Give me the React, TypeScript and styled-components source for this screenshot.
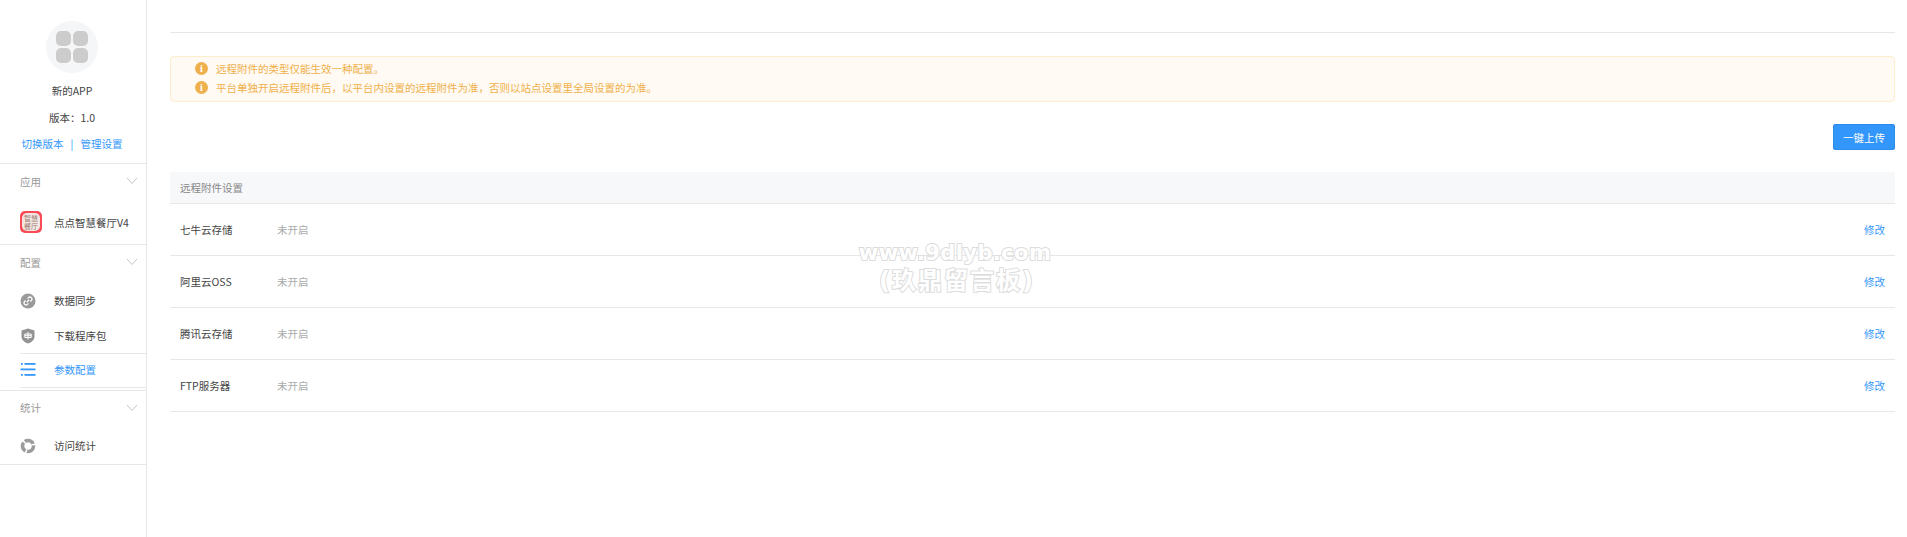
import styled, { createGlobalStyle } from 'styled-components';

const blue = '#3296fa';
const line = '#e7e7e7';

const GlobalStyle = createGlobalStyle`
  * { box-sizing: border-box; }
  html, body { margin: 0; padding: 0; background: #fff; }
  body {
    font-family: "Noto Sans CJK SC", "Liberation Sans", sans-serif;
    font-size: 10.5px;
    color: #444;
    overflow: hidden;
  }
`;

const Page = styled.div`
  position: relative;
  display: flex;
  height: 537px;
`;

// 왼쪽 메뉴
const Sidebar = styled.aside`
  width: 147px;
  flex: none;
  border-right: 1px solid ${line};
`;

const AppInfo = styled.div`
  height: 164px;
  padding: 21px 2px 0 0;
  display: flex;
  flex-direction: column;
  align-items: center;
  border-bottom: 1px solid ${line};
`;

const Avatar = styled.div`
  width: 52px;
  height: 52px;
  margin-bottom: 4px;
  border-radius: 50%;
  background: #f5f6f8;
  display: grid;
  grid-template-columns: 15px 15px;
  grid-auto-rows: 15px;
  gap: 2px;
  place-content: center;
  span {
    background: #ccc;
    border-radius: 5px;
  }
`;

const InfoLine = styled.div`
  height: 27px;
  line-height: 27px;
`;

const LinkRow = styled.div`
  height: 26px;
  line-height: 26px;
  color: ${blue};
  display: flex;
  gap: 7px;
`;

const Section = styled.section`
  border-bottom: 1px solid ${line};
  padding-bottom: ${p => p.$bottom ?? 0}px;
`;

const SectionTitle = styled.div`
  height: ${p => p.$height ?? 36}px;
  padding: 0 8px ${p => p.$under ?? 2}px 20px;
  display: flex;
  align-items: center;
  justify-content: space-between;
  color: #999;
`;

const Item = styled.div`
  height: ${p => p.$height ?? 35}px;
  padding-left: 20px;
  display: flex;
  align-items: center;
`;

const ActiveItem = styled(Item)`
  margin-left: 20px;
  padding: 0 0 2px;
  color: ${blue};
  border-top: 1px solid ${line};
  border-bottom: 1px solid ${line};
`;

const ItemIcon = styled.span`
  width: 34px;
  flex: none;
  display: flex;
  align-items: center;
`;

const AppLogo = styled.span`
  width: 22px;
  height: 22px;
  border-radius: 5px;
  background: #fb4a55;
  display: flex;
  align-items: center;
  justify-content: center;
  span {
    width: 18px;
    height: 18px;
    border-radius: 5px;
    background: #f1e6e1;
    color: #a07a70;
    font-size: 7px;
    line-height: 8px;
    text-align: center;
    padding-top: 1px;
  }
`;

// 오른쪽 본문
const Main = styled.main`
  flex: 1;
  padding: 0 12px 0 23px;
`;

const TopLine = styled.div`
  height: 33px;
  border-bottom: 1px solid ${line};
`;

const Alert = styled.div`
  margin-top: 23px;
  height: 46px;
  padding: 2px 0 0 24px;
  background: #fffaf3;
  border: 1px solid #fdeecb;
  border-radius: 4px;
  color: #efb04a;
`;

const AlertRow = styled.div`
  height: 19px;
  display: flex;
  align-items: center;
  gap: 8px;
`;

const InfoDot = styled.span`
  width: 13px;
  height: 13px;
  border-radius: 50%;
  background: #eeb04c;
  color: #fff;
  font: bold 10px/13px "Liberation Serif", serif;
  text-align: center;
`;

const Toolbar = styled.div`
  margin-top: 22px;
  display: flex;
  justify-content: flex-end;
`;

const Button = styled.button`
  width: 62px;
  height: 26px;
  padding: 0;
  background: ${blue};
  border: 1px solid #2b8ceb;
  border-radius: 2px;
  color: #fff;
  font: inherit;
`;

const Table = styled.div`
  margin-top: 22px;
`;

const TableHead = styled.div`
  height: 32px;
  padding-left: 10px;
  display: flex;
  align-items: center;
  background: #f7f8fa;
  border-bottom: 1px solid ${line};
  color: #888;
`;

const Row = styled.div`
  height: 52px;
  padding: 0 10px;
  display: flex;
  align-items: center;
  border-bottom: 1px solid ${line};
`;

const RowName = styled.span`
  width: 97px;
`;

const RowStatus = styled.span`
  flex: 1;
  color: #aaa;
`;

const RowAction = styled.a`
  color: ${blue};
`;

const Watermark = styled.div`
  position: absolute;
  left: 755px;
  top: 240px;
  width: 400px;
  text-align: center;
  font-family: "DejaVu Sans", "Noto Sans CJK SC", sans-serif;
  font-weight: bold;
  color: #fff;
  -webkit-text-stroke: 2px #dcdcdc;
  paint-order: stroke fill;
`;

const WatermarkLine = styled.div`
  font-size: ${p => p.$size}px;
  line-height: ${p => p.$lh}px;
  letter-spacing: ${p => p.$gap}px;
  padding-left: ${p => p.$shift ?? 0}px;
`;

const Chevron = () => (
  <svg width="12" height="8" viewBox="0 0 12 8" fill="none" stroke="#c4c8cc" strokeWidth="1">
    <path d="M1 1l5 5.5L11 1" />
  </svg>
);

const LinkIcon = () => (
  <svg width="16" height="16" viewBox="0 0 16 16">
    <circle cx="8" cy="8" r="7.5" fill="#9a9a9a" />
    <path d="M6.8 9.2l2.4-2.4M7.5 5.6l1-1a2 2 0 0 1 2.9 2.9l-1 1M8.5 10.4l-1 1a2 2 0 0 1-2.9-2.9l1-1" fill="none" stroke="#fff" strokeWidth="1.3" />
  </svg>
);

const ShieldIcon = () => (
  <svg width="16" height="16" viewBox="0 0 16 16">
    <path d="M8 0.5l6.5 2v6c0 3.500-3 5.800-6.500 7-3.500-1.200-6.500-3.500-6.500-7v-6z" fill="#939393" />
    <path d="M4.800 6h6.400v3.500H4.800zM8 4v7.500M4.800 7.700h6.400" fill="none" stroke="#fff" strokeWidth="1" />
  </svg>
);

const ListIcon = () => (
  <svg width="16" height="15" viewBox="0 0 16 15" fill={blue}>
    <rect x="1" y="1" width="1.800" height="1.800" />
    <rect x="4.500" y="1" width="11" height="1.800" />
    <rect x="0.500" y="6.500" width="15" height="1.800" />
    <rect x="1" y="12" width="1.800" height="1.800" />
    <rect x="4.500" y="12" width="11" height="1.800" />
  </svg>
);

const StatIcon = () => (
  <svg width="16" height="16" viewBox="0 0 16 16" fill="none" stroke="#9c9c9c" strokeWidth="3.600">
    <circle cx="8" cy="8" r="5.500" strokeDasharray="9.500 1.500" />
  </svg>
);

const storages = ['七牛云存储', '阿里云OSS', '腾讯云存储', 'FTP服务器'];

export default function App() {
  return (
    <Page>
      <GlobalStyle />
      <Sidebar>
        <AppInfo>
          <Avatar>
            <span />
            <span />
            <span />
            <span />
          </Avatar>
          <InfoLine>新的APP</InfoLine>
          <InfoLine>版本：1.0</InfoLine>
          <LinkRow>
            <span>切换版本</span>
            <span>|</span>
            <span>管理设置</span>
          </LinkRow>
        </AppInfo>
        <Section>
          <SectionTitle>
            应用
            <Chevron />
          </SectionTitle>
          <Item $height={44}>
            <ItemIcon>
              <AppLogo>
                <span>智慧餐厅</span>
              </AppLogo>
            </ItemIcon>
            点点智慧餐厅V4
          </Item>
        </Section>
        <Section $bottom={2}>
          <SectionTitle $height={38} $under={4}>
            配置
            <Chevron />
          </SectionTitle>
          <Item>
            <ItemIcon>
              <LinkIcon />
            </ItemIcon>
            数据同步
          </Item>
          <Item>
            <ItemIcon>
              <ShieldIcon />
            </ItemIcon>
            下载程序包
          </Item>
          <ActiveItem>
            <ItemIcon>
              <ListIcon />
            </ItemIcon>
            参数配置
          </ActiveItem>
        </Section>
        <Section>
          <SectionTitle $under={3}>
            统计
            <Chevron />
          </SectionTitle>
          <Item $height={37}>
            <ItemIcon>
              <StatIcon />
            </ItemIcon>
            访问统计
          </Item>
        </Section>
      </Sidebar>
      <Main>
        <TopLine />
        <Alert>
          <AlertRow>
            <InfoDot>i</InfoDot>
            远程附件的类型仅能生效一种配置。
          </AlertRow>
          <AlertRow>
            <InfoDot>i</InfoDot>
            平台单独开启远程附件后，以平台内设置的远程附件为准，否则以站点设置里全局设置的为准。
          </AlertRow>
        </Alert>
        <Toolbar>
          <Button>一键上传</Button>
        </Toolbar>
        <Table>
          <TableHead>远程附件设置</TableHead>
          {storages.map(name => (
            <Row key={name}>
              <RowName>{name}</RowName>
              <RowStatus>未开启</RowStatus>
              <RowAction>修改</RowAction>
            </Row>
          ))}
        </Table>
      </Main>
      <Watermark>
        <WatermarkLine $size={21} $lh={27} $gap={0.4}>www.9dlyb.com</WatermarkLine>
        <WatermarkLine $size={24} $lh={29} $gap={2} $shift={4}>(玖鼎留言板)</WatermarkLine>
      </Watermark>
    </Page>
  );
}
